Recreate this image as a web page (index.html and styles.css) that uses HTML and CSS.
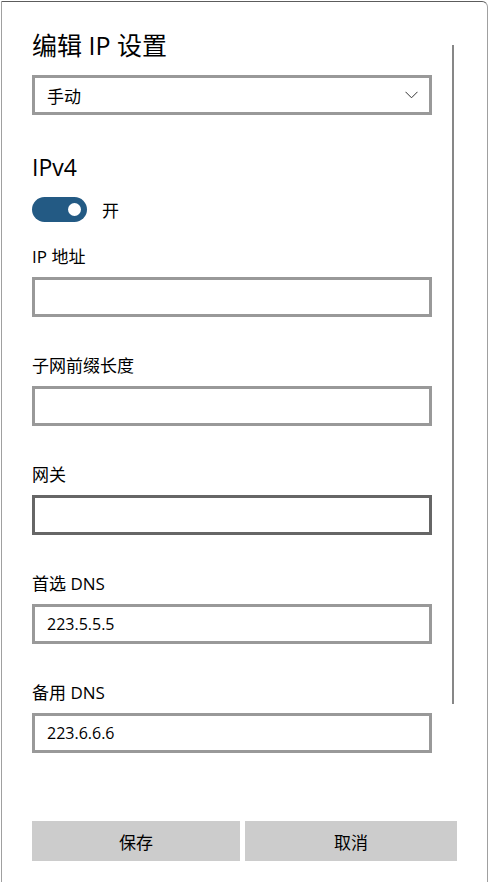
FILE: index.html
```html
<!DOCTYPE html>
<html lang="zh-CN">
<head>
    <meta charset="UTF-8">
    <meta name="viewport" content="width=device-width, initial-scale=1.0">
    <title>编辑 IP 设置</title>
    <link rel="stylesheet" href="styles.css">
</head>
<body>
    <div class="window">
        <div class="scroll-area">
            <div class="content">
                <h1 class="title">编辑 IP 设置</h1>

                <div class="select">
                    <span>手动</span>
                    <svg class="chevron" width="13" height="8" viewBox="0 0 13 8">
                        <path d="M0.5 0.8 L6.5 6.8 L12.5 0.8" fill="none" stroke="#333" stroke-width="1"/>
                    </svg>
                </div>

                <h2 class="section">IPv4</h2>

                <div class="toggle-row">
                    <span class="toggle"><span class="knob"></span></span>
                    <span class="toggle-text">开</span>
                </div>

                <label class="field-label" for="ip">IP 地址</label>
                <input class="field" type="text" id="ip">

                <label class="field-label" for="prefix">子网前缀长度</label>
                <input class="field" type="text" id="prefix">

                <label class="field-label" for="gateway">网关</label>
                <input class="field focused" type="text" id="gateway">

                <label class="field-label" for="dns1">首选 DNS</label>
                <input class="field" type="text" id="dns1" value="223.5.5.5">

                <label class="field-label" for="dns2">备用 DNS</label>
                <input class="field" type="text" id="dns2" value="223.6.6.6">
            </div>
            <div class="scrollbar"></div>
        </div>

        <div class="buttons">
            <button class="btn">保存</button>
            <button class="btn">取消</button>
        </div>
    </div>
</body>
</html>
```

FILE: styles.css
```css
body { margin: 0; background: #fff; font-family: "Open Sans", "Noto Sans CJK SC", sans-serif; color: #000; }

.window { box-sizing: border-box; width: 487px; height: 881px; margin: 1px 0 0 1px; border: 1px solid #a0a0a0; border-top-color: #5c5c5c; border-bottom: none; border-top-right-radius: 6px; display: flex; flex-direction: column; }

.scroll-area { display: flex; flex: 1; overflow: hidden; }
.content { width: 400px; padding: 26px 0 0 30px; }
.scrollbar { width: 2px; height: 659px; margin: 43px 0 0 20px; background: #878787; }

.title { margin: 0; font-size: 25px; font-weight: normal; line-height: 34px; }

.select { box-sizing: border-box; height: 40px; margin-top: 13px; border: 3px solid #999; display: flex; align-items: center; justify-content: space-between; padding: 0 11px 0 12px; font-size: 17px; }
.chevron { display: block; }

.section { margin: 37px 0 0; font-size: 23px; font-weight: normal; line-height: 30px; }

.toggle-row { display: flex; align-items: center; height: 25px; margin-top: 15px; }
.toggle { position: relative; display: block; width: 55px; height: 25px; border-radius: 13px; background: #235a84; }
.knob { position: absolute; right: 6px; top: 6px; width: 13px; height: 13px; border-radius: 50%; background: #fff; }
.toggle-text { margin-left: 15px; font-size: 17px; }

.field-label { display: block; margin-top: 38px; font-size: 17px; line-height: 22px; }
.toggle-row + .field-label { margin-top: 24px; }

.field { display: block; box-sizing: border-box; width: 100%; height: 40px; margin: 9px 0 0; border: 3px solid #999; padding: 0 12px; font: inherit; font-size: 16px; color: #000; outline: none; background: #fff; }
.field.focused { border-color: #666; }

.buttons { display: grid; grid-template-columns: 208px 212px; gap: 5px; padding: 0 0 21px 30px; }
.btn { height: 40px; border: none; background: #ccc; font: inherit; font-size: 17px; color: #000; padding: 0; }
```
